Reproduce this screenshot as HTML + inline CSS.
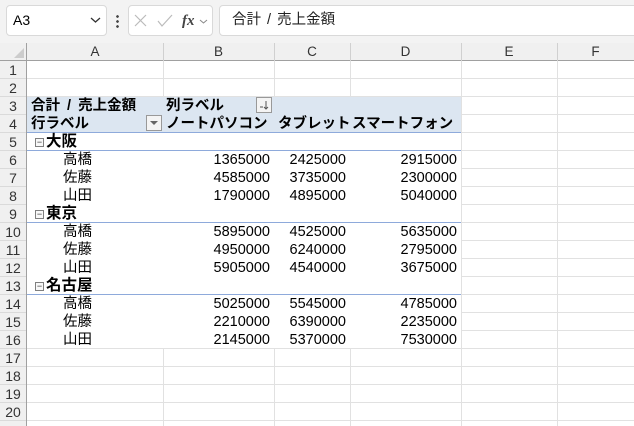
<!DOCTYPE html>
<html><head><meta charset="utf-8"><style>
*{margin:0;padding:0;box-sizing:border-box}
body{width:634px;height:426px;overflow:hidden;background:#fff;font-family:"Liberation Sans","Noto Sans CJK JP",sans-serif;position:relative;color:#000}
.a{position:absolute}
.top{left:0;top:0;width:634px;height:43px;background:#f3f3f3}
.box{background:#fff;border:1px solid #d9d9d9;border-radius:4px}
.ch{top:43px;height:18px;background:#f0f0f0;border-bottom:1px solid #a0a0a0;font-size:13.5px;color:#333;text-align:center;line-height:18px}
.rh{left:0;width:27px;background:#f0f0f0;border-right:1px solid #a0a0a0;top:61px;height:365px}
.rn{left:0;width:26px;height:18px;text-align:center;font-size:14px;line-height:18px;color:#333;border-bottom:1px solid #dadada}
.h{height:1px;background:#e1e1e1;left:27px;width:607px}
.v{width:1px;background:#e1e1e1;top:61px;height:365px}
.cv{width:1px;background:#d0d0d0;top:43px;height:18px}
.t{font-size:14.5px;line-height:18px;white-space:nowrap}
.b{font-weight:bold}
.r{text-align:right}
.bl{height:1px;background:#8eaadb;left:27px;width:434px}
.mn{width:9px;height:9px;border:1px solid #7f7f7f;font-size:9px;line-height:7px;text-align:center;color:#333;background:#f8f8f8}
</style></head><body>
<div class="a top"></div>
<div class="a box" style="left:6px;top:5px;width:101px;height:31px"></div>
<div class="a t" style="left:13px;top:11px;font-size:14px">A3</div>
<svg class="a" style="left:90px;top:16px" width="11" height="8"><path d="M1 2l4.5 4 4.5-4" stroke="#333" fill="none" stroke-width="1.3"/></svg>
<div class="a" style="left:116px;top:14px;width:3px;height:14px;background:radial-gradient(circle,#444 1.2px,transparent 1.5px) 0 0/3px 5px"></div>
<div class="a box" style="left:128px;top:5px;width:85px;height:31px"></div>
<svg class="a" style="left:134px;top:13px" width="80" height="16"><path d="M1 2l11 11M12 2L1 13" stroke="#bbb" stroke-width="1.2"/><path d="M24 8l4 5 10-11" stroke="#bbb" fill="none" stroke-width="1.2"/><text x="48" y="12" font-family="Liberation Serif" font-style="italic" font-weight="bold" font-size="15" fill="#444">fx</text><path d="M66 7l3.5 3 3.5-3" stroke="#888" fill="none"/></svg>
<div class="a box" style="left:219px;top:5px;width:420px;height:31px"></div>
<div class="a t" style="left:232px;top:11px;font-size:14.5px;color:#222;word-spacing:2px">合計 / 売上金額</div>

<div class="a ch" style="left:0;width:27px;border-right:1px solid #a0a0a0"></div>
<svg class="a" style="left:14px;top:48px" width="10" height="10"><path d="M10 0V10H0Z" fill="#ccc"/></svg>
<div class="a ch" style="left:27px;width:136px">A</div>
<div class="a ch" style="left:163px;width:111px">B</div>
<div class="a ch" style="left:274px;width:76px">C</div>
<div class="a ch" style="left:350px;width:111px">D</div>
<div class="a ch" style="left:461px;width:96px">E</div>
<div class="a ch" style="left:557px;width:77px">F</div>
<div class="a cv" style="left:163px"></div><div class="a cv" style="left:274px"></div><div class="a cv" style="left:350px"></div><div class="a cv" style="left:461px"></div><div class="a cv" style="left:557px"></div>

<div class="a rh"></div>
<div class="a rn" style="top:61px">1</div><div class="a rn" style="top:79px">2</div><div class="a rn" style="top:97px">3</div><div class="a rn" style="top:115px">4</div><div class="a rn" style="top:133px">5</div><div class="a rn" style="top:151px">6</div><div class="a rn" style="top:169px">7</div><div class="a rn" style="top:187px">8</div><div class="a rn" style="top:205px">9</div><div class="a rn" style="top:223px">10</div><div class="a rn" style="top:241px">11</div><div class="a rn" style="top:259px">12</div><div class="a rn" style="top:277px">13</div><div class="a rn" style="top:295px">14</div><div class="a rn" style="top:313px">15</div><div class="a rn" style="top:331px">16</div><div class="a rn" style="top:349px">17</div><div class="a rn" style="top:367px">18</div><div class="a rn" style="top:385px">19</div><div class="a rn" style="top:403px">20</div>

<div class="a h" style="top:78px"></div><div class="a h" style="top:96px"></div>
<div class="a h" style="top:348px"></div><div class="a h" style="top:366px"></div><div class="a h" style="top:384px"></div><div class="a h" style="top:402px"></div><div class="a h" style="top:420px"></div>
<div class="a h" style="left:461px;width:173px;top:114px"></div><div class="a h" style="left:461px;width:173px;top:132px"></div><div class="a h" style="left:461px;width:173px;top:150px"></div><div class="a h" style="left:461px;width:173px;top:168px"></div><div class="a h" style="left:461px;width:173px;top:186px"></div><div class="a h" style="left:461px;width:173px;top:204px"></div><div class="a h" style="left:461px;width:173px;top:222px"></div><div class="a h" style="left:461px;width:173px;top:240px"></div><div class="a h" style="left:461px;width:173px;top:258px"></div><div class="a h" style="left:461px;width:173px;top:276px"></div><div class="a h" style="left:461px;width:173px;top:294px"></div><div class="a h" style="left:461px;width:173px;top:312px"></div><div class="a h" style="left:461px;width:173px;top:330px"></div>
<div class="a v" style="left:163px;height:36px"></div><div class="a v" style="left:274px;height:36px"></div><div class="a v" style="left:350px;height:36px"></div>
<div class="a v" style="left:163px;top:349px;height:77px"></div><div class="a v" style="left:274px;top:349px;height:77px"></div><div class="a v" style="left:350px;top:349px;height:77px"></div>
<div class="a v" style="left:461px"></div><div class="a v" style="left:557px"></div>

<div class="a" style="left:27px;top:97px;width:434px;height:35px;background:#dce6f1"></div>
<div class="a bl" style="top:132px"></div><div class="a bl" style="top:150px"></div><div class="a bl" style="top:222px"></div><div class="a bl" style="top:294px"></div>
<div class="a t b" style="left:31px;top:97px;word-spacing:3px">合計 / 売上金額</div>
<div class="a t b" style="left:166px;top:97px">列ラベル</div>
<div class="a" style="left:256px;top:97px;width:16px;height:16px;border:1px solid #999;background:#f4f4f4"></div>
<svg class="a" style="left:259px;top:100px" width="10" height="10"><path d="M1 7h3M7 1v8M5 7l2 2 2-2" stroke="#555" fill="none"/></svg>
<div class="a t b" style="left:31px;top:115px">行ラベル</div>
<div class="a" style="left:146px;top:115px;width:16px;height:16px;border:1px solid #999;background:#f4f4f4"></div>
<svg class="a" style="left:149px;top:120px" width="10" height="6"><path d="M1 1h8L5 5z" fill="#666"/></svg>
<div class="a t b" style="left:166px;top:115px">ノートパソコン</div>
<div class="a t b" style="left:278px;top:115px">タブレット</div>
<div class="a t b" style="left:352px;top:115px">スマートフォン</div>

<div class="a mn" style="left:35px;top:138px">−</div><div class="a t b" style="left:46px;top:133px;font-size:15.5px">大阪</div>
<div class="a mn" style="left:35px;top:210px">−</div><div class="a t b" style="left:46px;top:205px;font-size:15.5px">東京</div>
<div class="a mn" style="left:35px;top:282px">−</div><div class="a t b" style="left:46px;top:277px;font-size:15.5px">名古屋</div>

<div class="a t" style="left:63px;top:151px">高橋</div><div class="a t" style="left:63px;top:169px">佐藤</div><div class="a t" style="left:63px;top:187px">山田</div>
<div class="a t" style="left:63px;top:223px">高橋</div><div class="a t" style="left:63px;top:241px">佐藤</div><div class="a t" style="left:63px;top:259px">山田</div>
<div class="a t" style="left:63px;top:295px">高橋</div><div class="a t" style="left:63px;top:313px">佐藤</div><div class="a t" style="left:63px;top:331px">山田</div>

<div class="a t r" style="left:163px;width:107px;top:151px">1365000<br>4585000<br>1790000</div>
<div class="a t r" style="left:274px;width:72px;top:151px">2425000<br>3735000<br>4895000</div>
<div class="a t r" style="left:350px;width:107px;top:151px">2915000<br>2300000<br>5040000</div>
<div class="a t r" style="left:163px;width:107px;top:223px">5895000<br>4950000<br>5905000</div>
<div class="a t r" style="left:274px;width:72px;top:223px">4525000<br>6240000<br>4540000</div>
<div class="a t r" style="left:350px;width:107px;top:223px">5635000<br>2795000<br>3675000</div>
<div class="a t r" style="left:163px;width:107px;top:295px">5025000<br>2210000<br>2145000</div>
<div class="a t r" style="left:274px;width:72px;top:295px">5545000<br>6390000<br>5370000</div>
<div class="a t r" style="left:350px;width:107px;top:295px">4785000<br>2235000<br>7530000</div>
</body></html>
